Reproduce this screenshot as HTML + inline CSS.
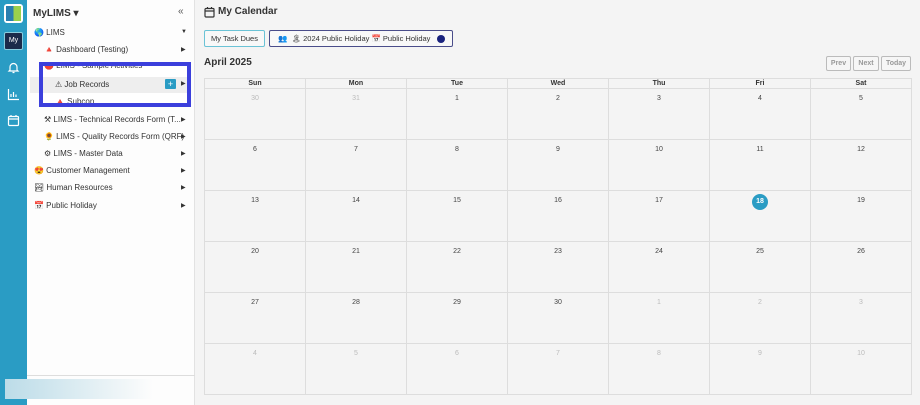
<!DOCTYPE html><html><head><style>
*{box-sizing:border-box;margin:0;padding:0}
body{width:920px;height:405px;overflow:hidden;background:#f4f4f4;font-family:"Liberation Sans",sans-serif;position:relative;color:#333}
.rail{position:absolute;left:0;top:0;width:27px;height:405px;background:#2a9cc4}
.side{position:absolute;left:27px;top:0;width:168px;height:405px;background:#fdfdfd;border-right:1px solid #e2e2e2}
.it{position:absolute;font-size:8px;color:#333;white-space:nowrap}
.arr{position:absolute;left:181px;font-size:6px;color:#333}
table{position:absolute;left:204px;top:78px;width:708px;border-collapse:collapse;table-layout:fixed}
td,th{border:1px solid #ddd;font-size:7px;text-align:center;vertical-align:top}
th{height:10px;font-weight:bold;line-height:9px;color:#333}
td{height:51px;padding-top:6px;color:#444}
td.o{color:#bbb}
.btn{position:absolute;top:56px;height:15px;border:1px solid #bbb;border-radius:2px;font-size:7px;color:#999;font-weight:bold;line-height:13px;text-align:center;background:#f6f6f6}
</style></head><body>
<div class="rail">
<div style="position:absolute;left:4px;top:4px;width:19px;height:19px;background:#fff;border-radius:3px;padding:2px"><div style="width:15px;height:15px;background:linear-gradient(90deg,#2a7fb0 50%,#9ad04c 50%)"></div></div>
<div style="position:absolute;left:4px;top:32px;width:19px;height:18px;background:#1b2a4a;border:1px solid #8cd;border-radius:2px;color:#fff;font-size:7px;text-align:center;line-height:16px">My</div>
<svg style="position:absolute;left:7px;top:61px" width="13" height="13" fill="none" stroke="#fff" stroke-width="1.2"><path d="M3 9V6a3.5 3.5 0 0 1 7 0v3l1 1H2zM5.5 11.5h2"/></svg>
<svg style="position:absolute;left:7px;top:88px" width="13" height="13" fill="none" stroke="#fff" stroke-width="1.2"><path d="M1.5 1v10.5H12M4 9V6M6.5 9V4M9 9V6.5"/></svg>
<svg style="position:absolute;left:7px;top:114px" width="13" height="13" fill="none" stroke="#fff" stroke-width="1.2"><rect x="1.5" y="2.5" width="10" height="9" rx="1"/><path d="M1.5 5h10M4 1v2M9 1v2"/></svg>
</div>
<div class="side">
<div class="it" style="left:6px;top:8px;font-size:10px;font-weight:bold">MyLIMS ▾</div>
<div class="it" style="left:151px;top:6px;font-size:10px;color:#555">«</div>
<div style="position:absolute;left:0;top:375px;width:168px;border-top:1px solid #ddd"></div>
</div>
<div class="it" style="left:34px;top:28px">🌎 LIMS</div><div class="arr" style="top:29px">▼</div>
<div class="it" style="left:44px;top:45px">🔺 Dashboard (Testing)</div><div class="arr" style="top:46px">▶</div>
<div style="position:absolute;left:30px;top:77px;width:160px;height:16px;background:#eee"></div>
<div style="position:absolute;left:39px;top:62px;width:152px;height:45px;border:4px solid #3b3fdc;background:#fff;overflow:hidden">
<div class="it" style="left:1px;top:-5px">🔴 LIMS - Sample Activities</div>
<div style="position:absolute;left:0;top:11px;width:144px;height:16px;background:#eee"></div>
<div class="it" style="left:12px;top:14px">⚠ Job Records</div>
<div style="position:absolute;left:122px;top:13px;width:11px;height:10px;background:#2a9cc4;color:#fff;font-size:9px;line-height:10px;text-align:center;border-radius:1px">+</div>
<div class="it" style="left:138px;top:14px;font-size:6px">▶</div>
<div class="it" style="left:12px;top:31px">🔺 Subcon</div>
</div>
<div class="it" style="left:44px;top:115px">⚒ LIMS - Technical Records Form (T...</div><div class="arr" style="top:116px">▶</div>
<div class="it" style="left:44px;top:132px">🌻 LIMS - Quality Records Form (QRF)</div><div class="arr" style="top:133px">▶</div>
<div class="it" style="left:44px;top:149px">⚙ LIMS - Master Data</div><div class="arr" style="top:150px">▶</div>
<div class="it" style="left:34px;top:166px">😍 Customer Management</div><div class="arr" style="top:167px">▶</div>
<div class="it" style="left:34px;top:183px">🏞 Human Resources</div><div class="arr" style="top:184px">▶</div>
<div class="it" style="left:34px;top:201px">📅 Public Holiday</div><div class="arr" style="top:202px">▶</div>
<div style="position:absolute;left:5px;top:379px;width:148px;height:20px;background:linear-gradient(90deg,#bcdce8,#f0f6f8 80%,transparent)"></div>
<svg style="position:absolute;left:204px;top:6px" width="11" height="12" fill="none" stroke="#333" stroke-width="1.2"><rect x="1" y="2.5" width="9" height="8.5" rx="1"/><path d="M1 5h9M3.5 1v2M7.5 1v2"/></svg>
<div class="it" style="left:218px;top:6px;font-size:10px;font-weight:bold">My Calendar</div>
<div style="position:absolute;left:204px;top:30px;width:61px;height:17px;border:1px solid #6bc3d6;border-radius:2px;font-size:7.5px;line-height:15px;text-align:center;background:#f8f8f8">My Task Dues</div>
<div style="position:absolute;left:269px;top:30px;width:184px;height:17px;border:1px solid #4a4d8a;border-radius:2px;font-size:7.5px;line-height:15px;padding-left:8px;background:#f8f8f8;white-space:nowrap">👥 &nbsp;🏝 2024 Public Holiday 📅 Public Holiday <span style="display:inline-block;width:8px;height:8px;border-radius:50%;background:#1a237e;vertical-align:middle;margin-left:4px"></span></div>
<div class="it" style="left:204px;top:57px;font-size:10px;font-weight:bold">April 2025</div>
<div class="btn" style="left:826px;width:25px">Prev</div>
<div class="btn" style="left:853px;width:26px">Next</div>
<div class="btn" style="left:881px;width:30px">Today</div>
<table>
<tr><th>Sun</th><th>Mon</th><th>Tue</th><th>Wed</th><th>Thu</th><th>Fri</th><th>Sat</th></tr>
<tr><td class="o">30</td><td class="o">31</td><td>1</td><td>2</td><td>3</td><td>4</td><td>5</td></tr>
<tr><td>6</td><td>7</td><td>8</td><td>9</td><td>10</td><td>11</td><td>12</td></tr>
<tr><td>13</td><td>14</td><td>15</td><td>16</td><td>17</td><td style="padding-top:3px"><span style="display:inline-block;width:16px;height:16px;border-radius:50%;background:#2a9cc4;color:#fff;font-weight:bold;line-height:16px">18</span></td><td>19</td></tr>
<tr><td>20</td><td>21</td><td>22</td><td>23</td><td>24</td><td>25</td><td>26</td></tr>
<tr><td>27</td><td>28</td><td>29</td><td>30</td><td class="o">1</td><td class="o">2</td><td class="o">3</td></tr>
<tr><td class="o">4</td><td class="o">5</td><td class="o">6</td><td class="o">7</td><td class="o">8</td><td class="o">9</td><td class="o">10</td></tr>
</table>
</body></html>
